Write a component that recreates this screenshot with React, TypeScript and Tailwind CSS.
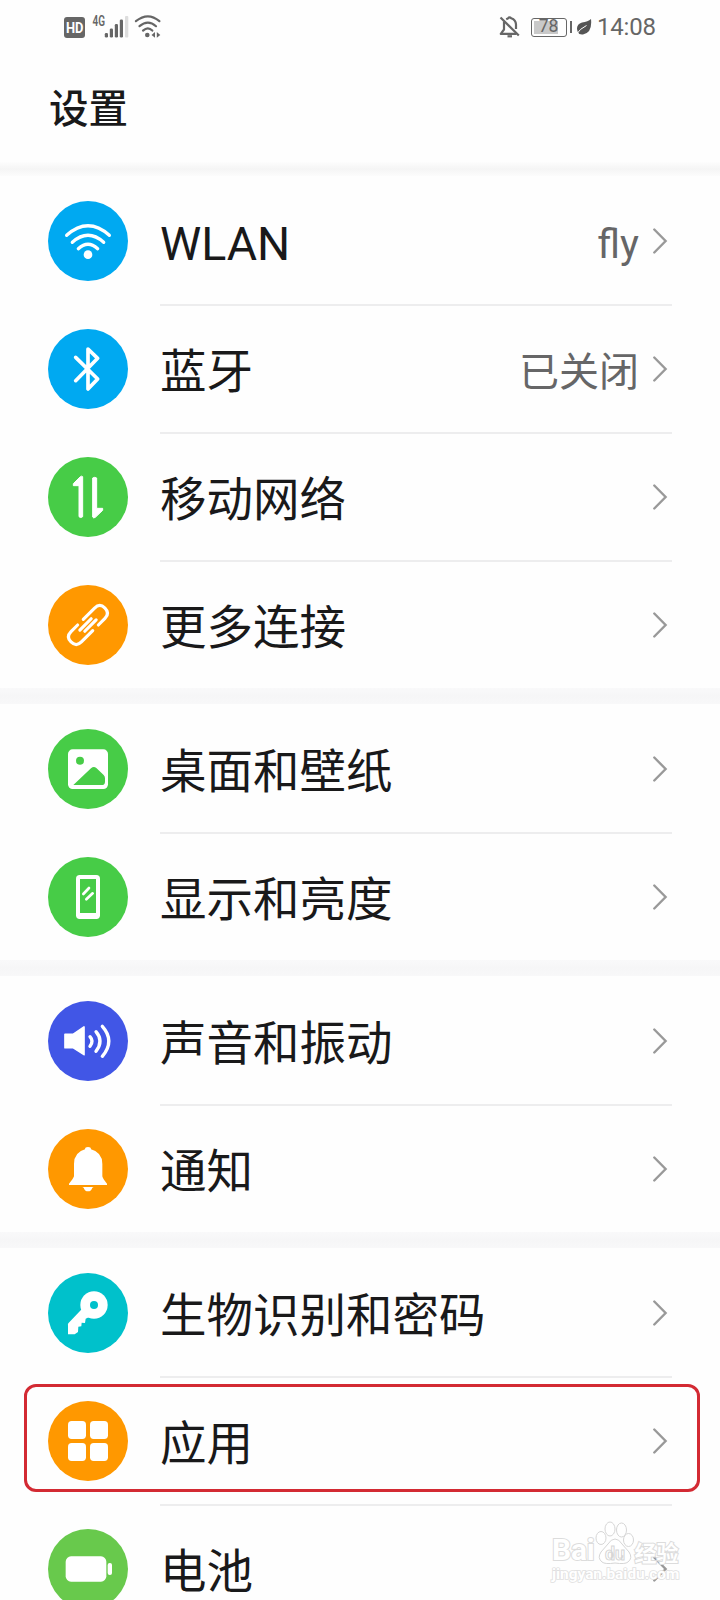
import type { ReactNode } from "react";

type Item = {
  label: string;
  color: string;
  icon: ReactNode;
  value?: string;
  highlighted?: boolean;
};

const line = {
  fill: "none",
  stroke: "#fff",
  strokeLinecap: "round" as const,
  strokeLinejoin: "round" as const,
};

const WifiIcon = (
  <g {...line} strokeWidth={10}>
    <path d="M56 103Q120 46 184 103" />
    <path d="M73 124Q120 82 167 124" />
    <path d="M91 143Q120 117 149 143" />
    <circle cx="120" cy="161" r="13" fill="#fff" stroke="none" />
  </g>
);

const BluetoothIcon = (
  <path {...line} strokeWidth={11} d="M83 85L149 150L120 180V60L149 88L83 155" />
);

const DataIcon = (
  <g fill="#fff" stroke="#fff" strokeWidth={3} strokeLinejoin="round">
    <path d="M104 59V179Q98 184 93 179V86H76V80L97 59Q101 56 104 59Z" />
    <path d="M134 63Q140 59 146 63V154H164V160L142 181Q136 185 134 180Z" />
  </g>
);

const LinkIcon = (
  <g transform="rotate(-45 120 120)" {...line} strokeWidth={9.5}>
    <path d="M118 142H70Q48 142 48 120T70 98H98" />
    <path d="M122 98H170Q192 98 192 120T170 142H142" />
    <path d="M92 113.5H140" />
    <path d="M100 126.5H148" />
  </g>
);

const ImageIcon = (color: string) => (
  <g>
    <rect x="60" y="61" width="120" height="119" rx="14" fill="#fff" />
    <circle cx="96" cy="95" r="12" fill={color} />
    <path
      d="M76 168L129 118Q137 110 145 117L167 138Q171 142 171 148V158Q171 168 161 168Z"
      fill={color}
    />
  </g>
);

const DisplayIcon = (
  <g {...line}>
    <rect x="84" y="54" width="72" height="132" rx="11" fill="#fff" stroke="none" />
    <rect x="96" y="66" width="48" height="102" fill="#47cc47" stroke="none" />
    <path strokeWidth={8} d="M106 111L123 93M115 127L134 109" />
  </g>
);

const SoundIcon = (
  <g {...line}>
    <path fill="#fff" strokeWidth={5} d="M51 100H75L108 78V161L75 140H51Z" />
    <g strokeWidth={10}>
      <path d="M126 107Q138 120 126 136" />
      <path d="M144 92Q168 120 144 151" />
      <path d="M163 76Q202 120 163 166" />
    </g>
  </g>
);

const BellIcon = (
  <g fill="#fff">
    <path d="M111 61Q111 54 120 54T129 61Q163 70 163 105V142Q164 149 177 164V168H63V164Q76 149 78 142V105Q78 70 111 61Z" />
    <path d="M103 174H137L133 176Q130 187 120 187T107 176Z" />
  </g>
);

const KeyIcon = (color: string) => (
  <g>
    <path
      fill="#fff"
      d="M101 109L61 151Q59 154 60 158V184H80L90 177L91 161L100 160L101 149L111 150L113 137L124 132Z"
    />
    <circle cx="138" cy="96" r="41" fill="#fff" />
    <circle cx="138" cy="96" r="12" fill={color} />
  </g>
);

const AppsIcon = (
  <g fill="#fff">
    <rect x="60" y="60" width="54" height="54" rx="11" />
    <rect x="126" y="60" width="54" height="54" rx="11" />
    <rect x="60" y="126" width="54" height="54" rx="11" />
    <rect x="126" y="126" width="54" height="54" rx="11" />
  </g>
);

const BatteryIcon = (
  <g fill="#fff">
    <rect x="53" y="82" width="122" height="76" rx="16" />
    <rect x="179" y="102" width="13" height="36" rx="6" />
  </g>
);

const groups: Item[][] = [
  [
    { label: "WLAN", color: "#00a9f1", icon: WifiIcon, value: "fly" },
    { label: "蓝牙", color: "#00a9f1", icon: BluetoothIcon, value: "已关闭" },
    { label: "移动网络", color: "#47cc47", icon: DataIcon },
    { label: "更多连接", color: "#ff9800", icon: LinkIcon },
  ],
  [
    { label: "桌面和壁纸", color: "#47cc47", icon: ImageIcon("#47cc47") },
    { label: "显示和亮度", color: "#47cc47", icon: DisplayIcon },
  ],
  [
    { label: "声音和振动", color: "#4156e6", icon: SoundIcon },
    { label: "通知", color: "#ff9800", icon: BellIcon },
  ],
  [
    { label: "生物识别和密码", color: "#00c1cb", icon: KeyIcon("#00c1cb") },
    { label: "应用", color: "#ff9800", icon: AppsIcon, highlighted: true },
    { label: "电池", color: "#68c94c", icon: BatteryIcon },
  ],
];

function Row({ item, first }: { item: Item; first: boolean }) {
  return (
    <li className="relative flex h-32 shrink-0 items-center pl-12">
      <svg viewBox="0 0 240 240" className="mt-px size-20 shrink-0">
        <circle cx="120" cy="120" r="120" fill={item.color} />
        {item.icon}
      </svg>
      <div
        className={`ml-8 mr-12 flex h-32 flex-1 items-center border-t-2 ${
          first ? "border-transparent" : "border-[#ededee]"
        }`}
      >
        <span className="flex-1 whitespace-nowrap pt-1.5 text-[46.5px] leading-none text-[#19191a]">
          {item.label}
        </span>
        {item.value && (
          <span className="mr-3.5 pt-2 text-[40px] leading-none text-[#666667]">{item.value}</span>
        )}
        <svg viewBox="0 0 15 26" className="mr-1 h-[26px] w-[15px]" fill="none">
          <path d="M1.3 1.5L12.6 13L1.3 24.5" stroke="#999" strokeWidth="2.4" strokeLinecap="round" />
        </svg>
      </div>
      {item.highlighted && (
        <div className="absolute left-6 top-2 h-[108px] w-[676px] rounded-xl border-3 border-[#d32a33]" />
      )}
    </li>
  );
}

function StatusBar() {
  return (
    <div className="flex h-[54px] shrink-0 items-center pl-16 pr-[65px] text-[#666]">
      <svg viewBox="0 0 21 21" className="size-[21px]">
        <rect width="21" height="21" rx="3" fill="#666" />
        <text
          x="2"
          y="15.8"
          fontSize="14.5"
          fontWeight="700"
          fontFamily="Roboto"
          fill="#fff"
          textLength="17.5"
          lengthAdjust="spacingAndGlyphs"
        >
          HD
        </text>
      </svg>
      <svg viewBox="0 -5 70 36" className="ml-1.5 h-9 w-[70px]" fill="#666">
        <text
          x="1.5"
          y="11.5"
          fontSize="15"
          fontWeight="600"
          fontFamily="Roboto"
          textLength="12.5"
          lengthAdjust="spacingAndGlyphs"
        >
          4G
        </text>
        <rect x="13.8" y="19" width="3.2" height="4.5" rx="1.3" />
        <rect x="18.8" y="14.5" width="3.2" height="9" rx="1.3" />
        <rect x="23.8" y="10" width="3.2" height="13.5" rx="1.3" />
        <rect x="28.8" y="5.5" width="3.2" height="18" rx="1.3" />
        <rect x="34" y="2" width="3.3" height="21.5" rx="1" fill="#ddd" />
        <g fill="none" stroke="#666" strokeWidth="2.2" strokeLinecap="round">
          <path d="M44.9 7.2Q57 -2.5 68.4 7.2" />
          <path d="M48.5 12.2Q57 5 65 12.2" />
          <path d="M52 16.6Q57 12 61.3 16.6" />
        </g>
        <circle cx="56.3" cy="21" r="2.3" />
        <path d="M64 18V23.8L60.5 21Z" />
        <path d="M65.8 18V23.8L69.3 21Z" />
      </svg>
      <div className="flex-1" />
      <svg viewBox="0 0 22 24" className="h-6 w-[22px]" fill="none" stroke="#666" strokeWidth="2.2">
        <path d="M1.5 2.5L19.8 20.5" />
        <path d="M5 6.5V14.5L1.8 18.8H17.5" strokeLinejoin="round" />
        <path d="M7.2 4.3L9 3.4Q10.5 1.5 12.2 3.3Q16.8 4.8 17 9.5V14" />
        <path d="M8.5 21.3H13" />
      </svg>
      <span className="ml-2.5 flex h-[19px] w-9 items-center rounded-[3px] border-[1.5px] border-[#666] p-[2px]">
        <span className="flex h-[13px] w-[24px] items-center justify-center whitespace-nowrap bg-[#c9c9c9] pl-1.5 text-[17.5px] leading-none">
          78
        </span>
      </span>
      <span className="ml-[3px] h-3 w-[2.5px] bg-[#666]" />
      <svg viewBox="0 0 16 18" className="ml-1 h-[18px] w-4">
        <path d="M15 1Q16.5 15 7 16.5Q3 17 1.8 14Q-1 7 6 4.5Q12 3.5 15 1Z" fill="#555" />
        <path d="M0 16.8Q4 10.5 10.5 7.5" fill="none" stroke="#fff" strokeWidth="1" />
      </svg>
      <span className="ml-[5px] w-[58px] whitespace-nowrap text-[24px] leading-none tracking-[-0.2px]">
        14:08
      </span>
    </div>
  );
}

function Watermark() {
  return (
    <div className="absolute left-[552px] top-[1520px] flex h-16 w-[136px] flex-col text-white">
      <div className="flex h-[45px] items-end whitespace-nowrap font-bold leading-none">
        <span className="text-[30px] tracking-[-0.2px] [-webkit-text-stroke:2px_#dcdcdc] [paint-order:stroke_fill]">
          Bai
        </span>
        <svg
          viewBox="0 0 40 44"
          className="h-11 w-10 shrink-0"
          fill="#fff"
          stroke="#d6d6d6"
          strokeWidth="1"
        >
          <ellipse cx="6" cy="17" rx="5" ry="6.5" />
          <ellipse cx="15" cy="8" rx="5" ry="7" />
          <ellipse cx="26.5" cy="9" rx="5" ry="7" />
          <ellipse cx="33.5" cy="19" rx="5" ry="6.5" />
          <path d="M20 18Q24 18 27 23L34 31Q38 37 33 41Q30 43.5 20 42Q10 43.5 7 41Q2 37 6 31L13 23Q16 18 20 18Z" />
          <text
            x="10"
            y="38.5"
            fontSize="18"
            fontWeight="700"
            fontFamily="Roboto"
            textLength="20"
            lengthAdjust="spacingAndGlyphs"
          >
            du
          </text>
        </svg>
        <span className="text-[22px] [-webkit-text-stroke:2px_#dcdcdc] [paint-order:stroke_fill]">
          经验
        </span>
      </div>
      <span className="mt-px whitespace-nowrap text-[15.4px] font-bold leading-[17px] [-webkit-text-stroke:1.6px_#e0e0e0] [paint-order:stroke_fill]">
        jingyan.baidu.com
      </span>
    </div>
  );
}

export default function App() {
  return (
    <main className="relative flex h-[1600px] w-[720px] flex-col overflow-hidden bg-[#fefefe] font-[Roboto,'Noto_Sans_CJK_SC',sans-serif]">
      <StatusBar />
      <header className="flex h-[108px] shrink-0 items-center pl-[49px] pt-[3px]">
        <h1 className="text-[39.5px] font-medium leading-none text-[#19191a]">设置</h1>
      </header>
      {groups.map((group, g) => (
        <section key={group[0].label} className="shrink-0">
          <div
            className={
              g === 0
                ? "h-3.5 bg-linear-to-b from-[#fdfdfd] via-[#f5f5f5] to-[#fcfcfc]"
                : "h-4 bg-linear-to-b from-[#f9f9fa] via-[#f6f6f7] to-[#f8f8f9]"
            }
          />
          <ul className="flex flex-col">
            {group.map((item, i) => (
              <Row key={item.label} item={item} first={i === 0} />
            ))}
          </ul>
        </section>
      ))}
      <Watermark />
    </main>
  );
}
